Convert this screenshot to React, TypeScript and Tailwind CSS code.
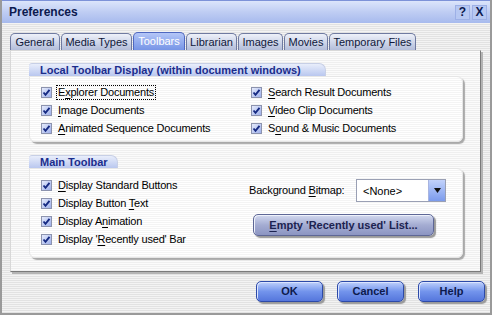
import React from "react";

const font = { fontFamily: '"Liberation Sans", Arial, sans-serif' };

function Check() {
  return (
    <span className="flex size-[11px] shrink-0 items-center justify-center border border-[#8c93ae] bg-gradient-to-br from-[#e6ebfb] to-[#9fb0ea]">
      <svg width="9" height="9" viewBox="0 0 9 9" aria-hidden>
        <path d="M1.5 4.5 L3.5 6.8 L7.5 1.8" fill="none" stroke="#162a82" strokeWidth="1.9" />
      </svg>
    </span>
  );
}

function Key({ children }: { children: React.ReactNode }) {
  return <span className="underline underline-offset-[2px]">{children}</span>;
}

function Row({ children, focus }: { children: React.ReactNode; focus?: boolean }) {
  return (
    <div className="flex h-[18px] items-center gap-[5px]">
      <Check />
      <span
        className={`px-[1px] leading-[13px] tracking-[-0.2px] ${focus ? "outline outline-1 outline-dotted outline-black" : ""}`}
      >
        {children}
      </span>
    </div>
  );
}

function GroupHeader({ title, width }: { title: string; width: string }) {
  return (
    <div
      className={`${width} h-[13px] rounded-tr-[7px] rounded-tl-[3px] border-t border-r border-[#c7cfe6] bg-gradient-to-b from-[#e9eefb] to-[#b9c7ef] pl-[11px] text-[11px] leading-[13px] font-bold text-[#1b2d8c]`}
    >
      {title}
    </div>
  );
}

const tabs = [
  { label: "General", w: "w-[50px]" },
  { label: "Media Types", w: "w-[71px]" },
  { label: "Toolbars", w: "w-[52px]", active: true },
  { label: "Librarian", w: "w-[51px]" },
  { label: "Images", w: "w-[45px]" },
  { label: "Movies", w: "w-[44px]" },
  { label: "Temporary Files", w: "w-[87px]" },
];

function BlueButton({ children }: { children: React.ReactNode }) {
  return (
    <button className="h-[21px] w-[67px] rounded-[5px] border border-[#2d4aa8] bg-gradient-to-b from-[#bfd0fb] via-[#7394ec] to-[#5576dc] text-[11px] font-bold text-[#0d1a4c] shadow-[inset_1px_1px_0_#dbe5ff,2px_2px_1px_#9a9a9a]">
      {children}
    </button>
  );
}

export default function App() {
  return (
    <div
      style={font}
      className="flex h-[315px] w-[492px] flex-col overflow-hidden border-b-2 border-l-2 border-r-2 border-[#9a9a9a] text-[11px] text-black"
    >
      {/* Title bar */}
      <div className="flex h-[23px] shrink-0 items-center justify-between border-t border-[#7d92d8] bg-gradient-to-b from-[#dce5fb] via-[#bfcdf3] to-[#a7baed] pl-[7px] pr-[3px]">
        <span className="text-[12px] font-bold text-[#0c1a4f]">Preferences</span>
        <div className="flex gap-[2px]">
          <span className="flex size-[15px] items-center justify-center border border-[#9db0e6] bg-[#b7c8f2] text-[12px] font-bold text-[#0c1a4f]">?</span>
          <span className="flex size-[15px] items-center justify-center border border-[#9db0e6] bg-[#b7c8f2] text-[12px] font-bold text-[#0c1a4f]">X</span>
        </div>
      </div>

      {/* Body */}
      <div className="flex-1 bg-[image:repeating-linear-gradient(to_bottom,#f3f3f3_0px,#f3f3f3_1px,#e2e2e2_1px,#e2e2e2_2px)] pl-[8px] pt-[9px]">
        <div className="flex h-[18px] items-end gap-[1px]">
          {tabs.map((t) =>
            t.active ? (
              <div
                key={t.label}
                className={`${t.w} flex h-[18px] items-center justify-center rounded-t-[5px] border border-b-0 border-[#4f68c0] bg-gradient-to-b from-[#b4c6f7] to-[#7694e6] text-[11px] text-white`}
              >
                {t.label}
              </div>
            ) : (
              <div
                key={t.label}
                className={`${t.w} flex h-[17px] items-center justify-center rounded-t-[5px] border border-b-0 border-[#6f7aa0] bg-gradient-to-b from-[#eef1f9] to-[#b3bdda] text-[11px] text-[#10183a]`}
              >
                {t.label}
              </div>
            )
          )}
        </div>

        {/* Panel */}
        <div className="h-[222px] w-[471px] border border-t-[#d8d8d8] border-l-[#d8d8d8] border-r-[#7a7a7a] border-b-[#7a7a7a] bg-[image:repeating-linear-gradient(to_bottom,#fbfbfb_0px,#fbfbfb_1px,#efefef_1px,#efefef_2px)] pl-[18px] pt-[12px] shadow-[2px_2px_0_#b4b4b4]">
          <GroupHeader title="Local Toolbar Display (within document windows)" width="w-[297px]" />
          <div className="flex h-[66px] w-[434px] rounded-b-[6px] rounded-tr-[6px] border border-[#e6e6e6] bg-[image:repeating-linear-gradient(to_bottom,#ffffff_0px,#ffffff_1px,#f4f4f4_1px,#f4f4f4_2px)] pl-[11px] pt-[6px] shadow-[2px_2px_1px_#a9a9a9]">
            <div className="w-[210px]">
              <Row focus>
                E<Key>x</Key>plorer Documents
              </Row>
              <Row>
                <Key>I</Key>mage Documents
              </Row>
              <Row>
                <Key>A</Key>nimated Sequence Documents
              </Row>
            </div>
            <div>
              <Row>
                <Key>S</Key>earch Result Documents
              </Row>
              <Row>
                <Key>V</Key>ideo Clip Documents
              </Row>
              <Row>
                S<Key>o</Key>und &amp; Music Documents
              </Row>
            </div>
          </div>

          <div className="mt-[13px]">
            <GroupHeader title="Main Toolbar" width="w-[89px]" />
            <div className="flex h-[90px] w-[434px] rounded-b-[6px] rounded-tr-[6px] border border-[#e6e6e6] bg-[image:repeating-linear-gradient(to_bottom,#ffffff_0px,#ffffff_1px,#f4f4f4_1px,#f4f4f4_2px)] pl-[11px] pt-[7px] shadow-[2px_2px_1px_#a9a9a9]">
              <div className="w-[208px]">
                <Row>
                  <Key>D</Key>isplay Standard Buttons
                </Row>
                <Row>
                  Display Button <Key>T</Key>ext
                </Row>
                <Row>
                  Display A<Key>n</Key>imation
                </Row>
                <Row>
                  Display '<Key>R</Key>ecently used' Bar
                </Row>
              </div>
              <div className="flex flex-col pt-[3px]">
                <div className="flex items-center">
                  <span className="w-[107px] tracking-[-0.2px]">
                    Background <Key>B</Key>itmap:
                  </span>
                  <div className="flex h-[23px] w-[90px] border border-[#9aa0b4] bg-white">
                    <span className="flex-1 pl-[6px] pt-[3px] text-[11px]">&lt;None&gt;</span>
                    <span className="flex w-[17px] items-center justify-center border-l border-[#a8b4e0] bg-gradient-to-b from-[#c2d2fb] to-[#7c9bec]">
                      <svg width="7" height="5" viewBox="0 0 7 5" aria-hidden>
                        <path d="M0 0 H7 L3.5 5 Z" fill="#111" />
                      </svg>
                    </span>
                  </div>
                </div>
                <button className="ml-[4px] mt-[12px] h-[22px] w-[181px] rounded-[5px] border border-[#5e6796] bg-gradient-to-b from-[#d3d9ef] via-[#a4acd2] to-[#8c95c2] text-[11px] font-bold text-[#1c2350] shadow-[inset_1px_1px_0_#eef1fb,2px_2px_1px_#9a9a9a]">
                  <Key>E</Key>mpty 'Recently used' List...
                </button>
              </div>
            </div>
          </div>
        </div>

        {/* Dialog buttons */}
        <div className="mt-[9px] flex justify-end gap-[14px] pr-[5px]">
          <BlueButton>OK</BlueButton>
          <BlueButton>Cancel</BlueButton>
          <BlueButton>Help</BlueButton>
        </div>
      </div>
    </div>
  );
}
